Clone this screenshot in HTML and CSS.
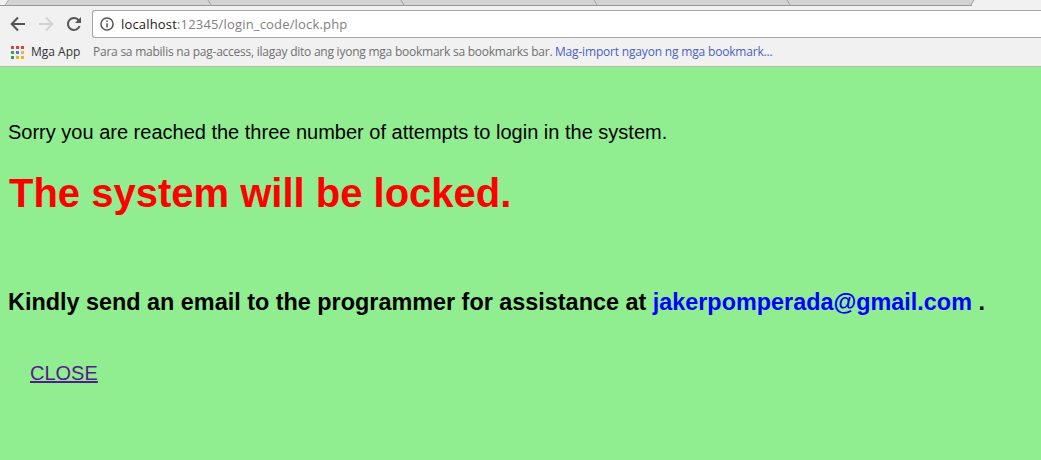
FILE: index.html
```html
<!DOCTYPE html>
<html lang="fil">
<head>
<meta charset="utf-8">
<title>Lock</title>
<link rel="stylesheet" href="styles.css">
</head>
<body>
<header class="browser">
  <svg class="tabs" width="1041" height="6" viewBox="0 0 1041 6">
    <path class="tab" d="M6 5.5L9 0H974L971 5.5Z"/>
    <path class="tab-edge" d="M5.5 5L8.5 0M208 0L211 5M401 0L404 5M594 0L597 5M787 0L790 5M974 0L971 5"/>
    <path class="tab-line" d="M0 5.5H972"/>
  </svg>
  <div class="toolbar">
    <svg class="nav" width="92" height="28" viewBox="0 10 92 28">
      <path class="stroke" d="M25 24H12M18 17.5L11.7 24L18 30.5"/>
      <path class="stroke off" d="M39 24H52M46 17.5L52.3 24L46 30.5"/>
      <path class="stroke" d="M78.8 20.4A6 6 0 1 0 79.6 26"/>
      <path class="fill" d="M81 17V23H75Z"/>
    </svg>
    <div class="address">
      <svg class="info" width="14" height="14" viewBox="0 0 14 14">
        <circle cx="7" cy="7" r="6.1"/>
        <path d="M7 6.2V10.5M7 3.4V5"/>
      </svg>
      <span class="url"><b>localhost</b>:12345/login_code/lock.php</span>
    </div>
  </div>
  <div class="bookmarks">
    <svg class="apps" width="13" height="13" viewBox="0 0 13 13">
      <path fill="#d9453d" d="M0 0h3v3H0zM5 0h3v3H5zM10 0h3v3h-3z"/>
      <path fill="#3b9a5f" d="M0 5h3v3H0zM0 10h3v3H0z"/>
      <path fill="#3b82ec" d="M5 5h3v3H5z"/>
      <path fill="#eeb422" d="M10 5h3v3h-3zM5 10h3v3H5zM10 10h3v3h-3z"/>
    </svg>
    <span class="apps-label">Mga App</span>
    <span class="hint">Para sa mabilis na pag-access, ilagay dito ang iyong mga bookmark sa bookmarks bar.</span>
    <span class="import">Mag-import ngayon ng mga bookmark...</span>
  </div>
</header>
<main class="page">
  <p class="notice">Sorry you are reached the three number of attempts to login in the system.</p>
  <h1 class="locked">The system will be locked.</h1>
  <h3 class="contact">Kindly send an email to the programmer for assistance at <span class="email">jakerpomperada@gmail.com</span> .</h3>
  <a class="close" href="#">CLOSE</a>
</main>
</body>
</html>
```
FILE: styles.css
```css
* { box-sizing: border-box; }
body {
  margin: 0;
  height: 460px;
  overflow: hidden;
  background: #90ee90;
  color: #000;
  font-family: "Liberation Sans", Arial, sans-serif;
}
.browser {
  height: 67px;
  background: #f1f1f1;
  border-bottom: 1px solid #b5b9b5;
  font-family: "Open Sans", "Noto Sans", sans-serif;
  white-space: nowrap;
}
.tabs { display: block; }
.tab { fill: #d3d3d3; }
.tab-edge { fill: none; stroke: #a2a2a2; }
.tab-line { stroke: #999; }
.toolbar { display: flex; padding-top: 4px; }
.nav { flex: none; }
.stroke { fill: none; stroke: #555; stroke-width: 2; }
.off { stroke: #d2d2d2; }
.fill { fill: #555; }
.address {
  display: flex;
  align-items: center;
  flex: 1;
  height: 28px;
  padding-left: 7px;
  background: #fff;
  border: 1px solid #a6a6a6;
  border-right: 0;
  border-radius: 3px 0 0 3px;
}
.info { fill: none; stroke: #555; stroke-width: 1.5; }
.url {
  margin-left: 7px;
  font-size: 13px;
  line-height: 26px;
  letter-spacing: 0.17px;
  color: #808080;
}
.url b { font-weight: 400; color: #222; }
.bookmarks {
  display: flex;
  align-items: center;
  height: 28px;
  padding-left: 11px;
  font-size: 12px;
  line-height: 28px;
}
.apps-label { width: 62px; padding-left: 7px; color: #333; }
.apps-label, .hint, .import { flex: none; }
.hint { width: 462px; color: #707070; letter-spacing: -0.24px; }
.import { color: #4a5fc4; letter-spacing: -0.18px; }
.apps-label { margin-right: 7px; }
.page { padding: 53px 8px 0; }
.notice { margin: 0; font-size: 20px; line-height: 24px; }
.locked {
  margin: 26px 0 0 1px;
  font-size: 40px;
  line-height: 46px;
  color: #f00;
}
.contact { margin: 73px 0 0; font-size: 23.4px; line-height: 27px; white-space: nowrap; }
.email { color: #00f; }
.close {
  display: inline-block;
  margin: 45px 0 0 22px;
  font-size: 20px;
  line-height: 24px;
  color: #551a8b;
}
```
